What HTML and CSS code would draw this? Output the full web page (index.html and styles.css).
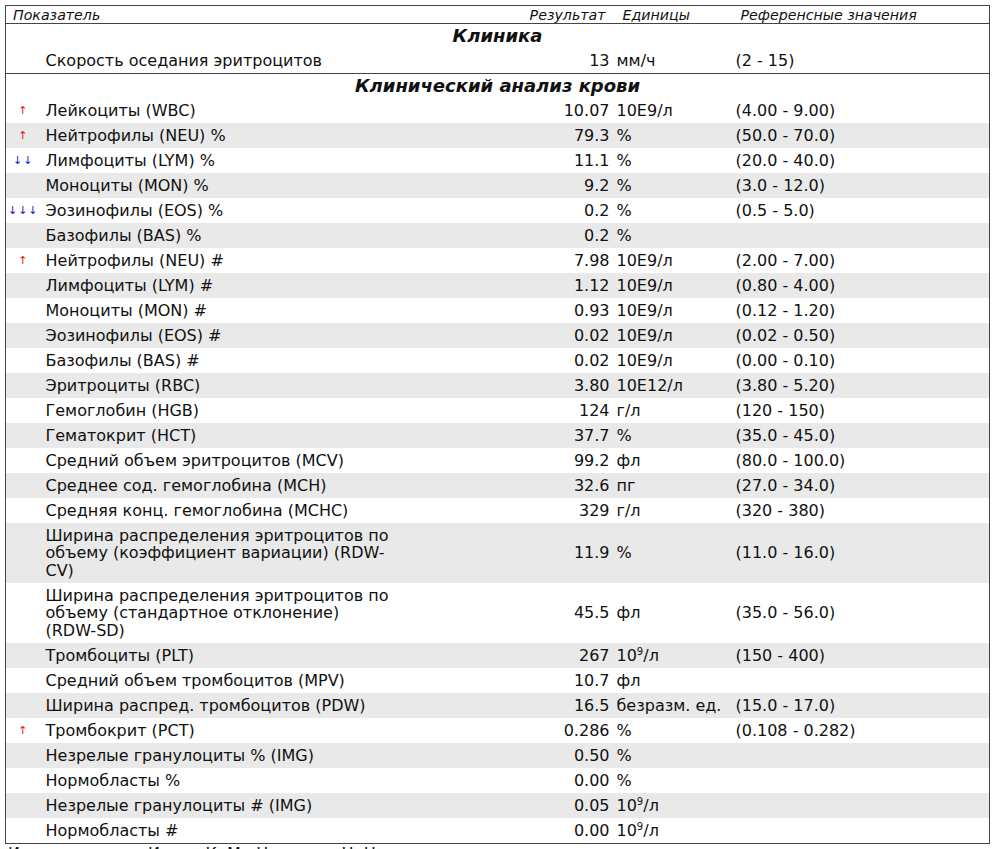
FILE: index.html
```html
<!DOCTYPE html>
<html lang="ru">
<head>
<meta charset="utf-8">
<title>Результаты анализов</title>
<link rel="stylesheet" href="styles.css">
</head>
<body>
<div class="page">
<table class="results">
  <colgroup>
    <col class="c-flag">
    <col class="c-name">
    <col class="c-res">
    <col class="c-unit">
    <col class="c-ref">
  </colgroup>
  <thead>
    <tr class="head">
      <th colspan="2" class="h-name">Показатель</th>
      <th class="h-res">Результат</th>
      <th class="h-unit">Единицы</th>
      <th class="h-ref">Референсные значения</th>
    </tr>
  </thead>
  <tbody>
    <tr class="section"><td colspan="5">Клиника</td></tr>
    <tr><td class="flag"></td><td class="name">Скорость оседания эритроцитов</td><td class="res">13</td><td class="unit">мм/ч</td><td class="ref">(2 - 15)</td></tr>
  </tbody>
  <tbody>
    <tr class="section sep"><td colspan="5">Клинический анализ крови</td></tr>
    <tr><td class="flag up">↑</td><td class="name">Лейкоциты (WBC)</td><td class="res">10.07</td><td class="unit">10E9/л</td><td class="ref">(4.00 - 9.00)</td></tr>
    <tr class="alt"><td class="flag up">↑</td><td class="name">Нейтрофилы (NEU) %</td><td class="res">79.3</td><td class="unit">%</td><td class="ref">(50.0 - 70.0)</td></tr>
    <tr><td class="flag down">↓↓</td><td class="name">Лимфоциты (LYM) %</td><td class="res">11.1</td><td class="unit">%</td><td class="ref">(20.0 - 40.0)</td></tr>
    <tr class="alt"><td class="flag"></td><td class="name">Моноциты (MON) %</td><td class="res">9.2</td><td class="unit">%</td><td class="ref">(3.0 - 12.0)</td></tr>
    <tr><td class="flag down">↓↓↓</td><td class="name">Эозинофилы (EOS) %</td><td class="res">0.2</td><td class="unit">%</td><td class="ref">(0.5 - 5.0)</td></tr>
    <tr class="alt"><td class="flag"></td><td class="name">Базофилы (BAS) %</td><td class="res">0.2</td><td class="unit">%</td><td class="ref"></td></tr>
    <tr><td class="flag up">↑</td><td class="name">Нейтрофилы (NEU) #</td><td class="res">7.98</td><td class="unit">10E9/л</td><td class="ref">(2.00 - 7.00)</td></tr>
    <tr class="alt"><td class="flag"></td><td class="name">Лимфоциты (LYM) #</td><td class="res">1.12</td><td class="unit">10E9/л</td><td class="ref">(0.80 - 4.00)</td></tr>
    <tr><td class="flag"></td><td class="name">Моноциты (MON) #</td><td class="res">0.93</td><td class="unit">10E9/л</td><td class="ref">(0.12 - 1.20)</td></tr>
    <tr class="alt"><td class="flag"></td><td class="name">Эозинофилы (EOS) #</td><td class="res">0.02</td><td class="unit">10E9/л</td><td class="ref">(0.02 - 0.50)</td></tr>
    <tr><td class="flag"></td><td class="name">Базофилы (BAS) #</td><td class="res">0.02</td><td class="unit">10E9/л</td><td class="ref">(0.00 - 0.10)</td></tr>
    <tr class="alt"><td class="flag"></td><td class="name">Эритроциты (RBC)</td><td class="res">3.80</td><td class="unit">10E12/л</td><td class="ref">(3.80 - 5.20)</td></tr>
    <tr><td class="flag"></td><td class="name">Гемоглобин (HGB)</td><td class="res">124</td><td class="unit">г/л</td><td class="ref">(120 - 150)</td></tr>
    <tr class="alt"><td class="flag"></td><td class="name">Гематокрит (HCT)</td><td class="res">37.7</td><td class="unit">%</td><td class="ref">(35.0 - 45.0)</td></tr>
    <tr><td class="flag"></td><td class="name">Средний объем эритроцитов (MCV)</td><td class="res">99.2</td><td class="unit">фл</td><td class="ref">(80.0 - 100.0)</td></tr>
    <tr class="alt"><td class="flag"></td><td class="name">Среднее сод. гемоглобина (MCH)</td><td class="res">32.6</td><td class="unit">пг</td><td class="ref">(27.0 - 34.0)</td></tr>
    <tr><td class="flag"></td><td class="name">Средняя конц. гемоглобина (MCHC)</td><td class="res">329</td><td class="unit">г/л</td><td class="ref">(320 - 380)</td></tr>
    <tr class="alt"><td class="flag"></td><td class="name">Ширина распределения эритроцитов по объему (коэффициент вариации) (RDW-CV)</td><td class="res">11.9</td><td class="unit">%</td><td class="ref">(11.0 - 16.0)</td></tr>
    <tr><td class="flag"></td><td class="name">Ширина распределения эритроцитов по объему (стандартное отклонение) (RDW-SD)</td><td class="res">45.5</td><td class="unit">фл</td><td class="ref">(35.0 - 56.0)</td></tr>
    <tr class="alt"><td class="flag"></td><td class="name">Тромбоциты (PLT)</td><td class="res">267</td><td class="unit">10<sup>9</sup>/л</td><td class="ref">(150 - 400)</td></tr>
    <tr><td class="flag"></td><td class="name">Средний объем тромбоцитов (MPV)</td><td class="res">10.7</td><td class="unit">фл</td><td class="ref"></td></tr>
    <tr class="alt"><td class="flag"></td><td class="name">Ширина распред. тромбоцитов (PDW)</td><td class="res">16.5</td><td class="unit">безразм. ед.</td><td class="ref">(15.0 - 17.0)</td></tr>
    <tr><td class="flag up">↑</td><td class="name">Тромбокрит (PCT)</td><td class="res">0.286</td><td class="unit">%</td><td class="ref">(0.108 - 0.282)</td></tr>
    <tr class="alt"><td class="flag"></td><td class="name">Незрелые гранулоциты % (IMG)</td><td class="res">0.50</td><td class="unit">%</td><td class="ref"></td></tr>
    <tr><td class="flag"></td><td class="name">Нормобласты %</td><td class="res">0.00</td><td class="unit">%</td><td class="ref"></td></tr>
    <tr class="alt"><td class="flag"></td><td class="name">Незрелые гранулоциты # (IMG)</td><td class="res">0.05</td><td class="unit">10<sup>9</sup>/л</td><td class="ref"></td></tr>
    <tr><td class="flag"></td><td class="name">Нормобласты #</td><td class="res">0.00</td><td class="unit">10<sup>9</sup>/л</td><td class="ref"></td></tr>
  </tbody>
</table>
<p class="footer">Исследователи: Ильин К. М., Новикова Н. Н.</p>
</div>
</body>
</html>
```

FILE: styles.css
```css
html, body {
  margin: 0;
  padding: 0;
  background: #ffffff;
}
body {
  font-family: "DejaVu Sans", Verdana, sans-serif;
  color: #111111;
}
.page {
  padding: 5px 0 0 5px;
  width: 985px;
}
.results {
  width: 985px;
  border-collapse: collapse;
  table-layout: fixed;
  border: 1px solid #444444;
  font-size: 16px;
}
.c-flag { width: 35px; }
.c-name { width: 356px; }
.c-res { width: 217px; }
.c-unit { width: 117px; }
.c-ref { width: auto; }

.head th {
  font-weight: normal;
  font-style: italic;
  font-size: 14.2px;
  line-height: 16px;
  padding: 0;
  text-align: left;
  border-bottom: 1px solid #444444;
  height: 17px;
}
.head .h-name { padding-left: 7px; }
.head .h-res { text-align: right; padding-right: 8px; }
.head .h-unit { padding-left: 9px; }
.head .h-ref { padding-left: 10px; }

.section td {
  text-align: center;
  font-weight: bold;
  font-style: italic;
  font-size: 18px;
  line-height: 24px;
  height: 24px;
  padding: 0;
}
.section.sep td {
  border-top: 1px solid #444444;
}
td {
  padding: 3.75px 0;
  line-height: 17.5px;
  vertical-align: middle;
}
tr.alt td {
  background: #e9e9e9;
}
.flag {
  text-align: center;
  font-size: 11px;
  letter-spacing: 1px;
}
.flag.up { color: #e01010; }
.flag.down { color: #1818c8; }
.name { padding-left: 5px; padding-right: 5px; }
.res { text-align: right; padding-right: 4px; }
.unit { padding-left: 3px; white-space: nowrap; }
.ref { padding-left: 5px; }
sup {
  font-size: 10px;
  line-height: 0;
  vertical-align: 6px;
}
.footer {
  margin: 1px 0 0 3px;
  font-size: 16px;
  line-height: 18px;
  white-space: nowrap;
}
```
